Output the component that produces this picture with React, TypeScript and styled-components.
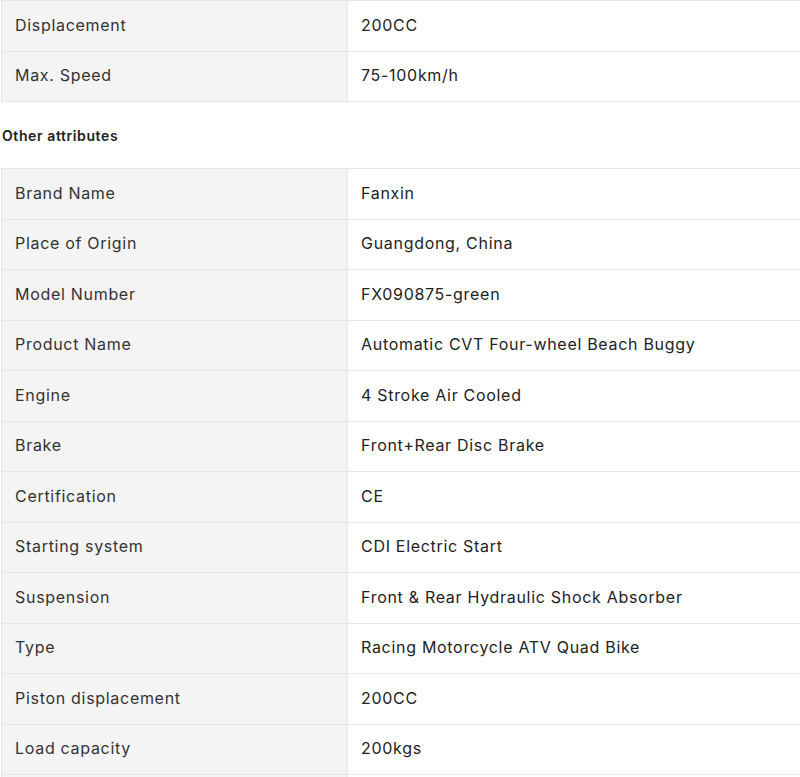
import React from "react";
import styled, { createGlobalStyle } from "styled-components";

const GlobalStyle = createGlobalStyle`
  html, body { margin: 0; padding: 0; background: #ffffff; }
  body { font-family: Inter, "Noto Sans", "Liberation Sans", sans-serif; color: #333333; }
`;

const Page = styled.div`
  width: 830px;
  padding-left: 1px;
  overflow: hidden;
`;

const Table = styled.div`
  display: flex;
  flex-direction: column;
  border-bottom: 1px solid #e6e6e6;
  border-right: 1px solid #e6e6e6;
  width: 840px;
`;

const Row = styled.div`
  display: grid;
  grid-template-columns: 346px 1fr;
  height: 50.5px;
  box-sizing: border-box;
  border-top: 1px solid #e6e6e6;
`;

const Cell = styled.div<{ $label?: boolean }>`
  display: flex;
  align-items: center;
  padding: 0 13px 2px;
  border-left: 1px solid #e6e6e6;
  background: ${(p) => (p.$label ? "#f4f4f4" : "#ffffff")};
  font-size: 16px;
  letter-spacing: 0.7px;
  color: ${(p) => (p.$label ? "#333333" : "#222222")};
  white-space: nowrap;
`;

const Heading = styled.div`
  font-size: 14px;
  font-weight: 600;
  letter-spacing: 0.6px;
  color: #222222;
  line-height: 20px;
  padding: 24px 0 22px 1px;
`;

const first: [string, string][] = [
  ["Displacement", "200CC"],
  ["Max. Speed", "75-100km/h"],
];

const other: [string, string][] = [
  ["Brand Name", "Fanxin"],
  ["Place of Origin", "Guangdong, China"],
  ["Model Number", "FX090875-green"],
  ["Product Name", "Automatic CVT Four-wheel Beach Buggy"],
  ["Engine", "4 Stroke Air Cooled"],
  ["Brake", "Front+Rear Disc Brake"],
  ["Certification", "CE"],
  ["Starting system", "CDI Electric Start"],
  ["Suspension", "Front & Rear Hydraulic Shock Absorber"],
  ["Type", "Racing Motorcycle ATV Quad Bike"],
  ["Piston displacement", "200CC"],
  ["Load capacity", "200kgs"],
  ["", ""],
];

function AttrTable({ rows }: { rows: [string, string][] }) {
  return (
    <Table>
      {rows.map(([k, v], i) => (
        <Row key={i}>
          <Cell $label>{k}</Cell>
          <Cell>{v}</Cell>
        </Row>
      ))}
    </Table>
  );
}

export default function App() {
  return (
    <Page>
      <GlobalStyle />
      <AttrTable rows={first} />
      <Heading>Other attributes</Heading>
      <AttrTable rows={other} />
    </Page>
  );
}
